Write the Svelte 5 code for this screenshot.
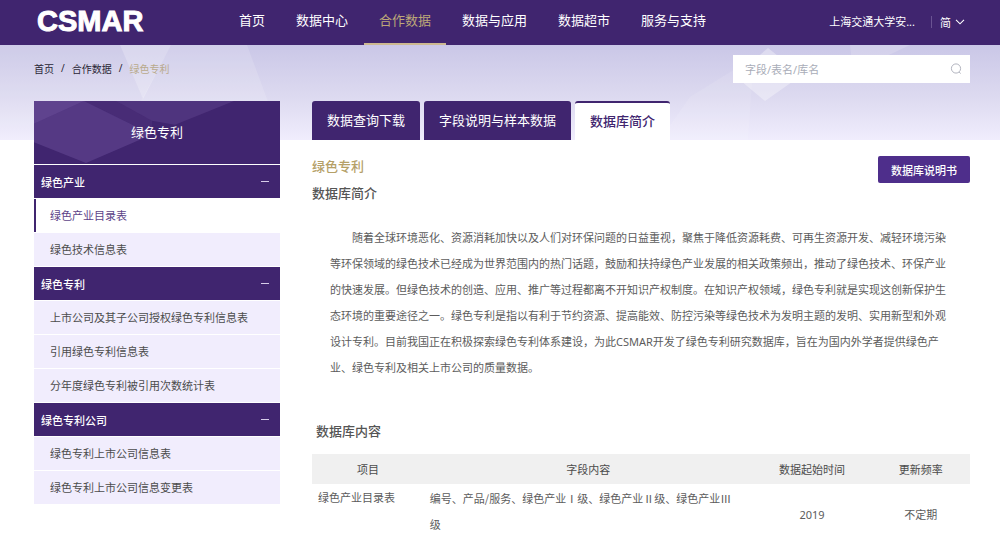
<script>
	const navItems = ['首页', '数据中心', '合作数据', '数据与应用', '数据超市', '服务与支持'];
	const tabs = ['数据查询下载', '字段说明与样本数据', '数据库简介'];

	let activeNav = $state('合作数据');
	let activeTab = $state('数据库简介');
	let activeItem = $state('绿色产业目录表');
	let keyword = $state('');

	let groups = $state([
		{ label: '绿色产业', open: true, items: ['绿色产业目录表', '绿色技术信息表'] },
		{
			label: '绿色专利',
			open: true,
			items: [
				'上市公司及其子公司授权绿色专利信息表',
				'引用绿色专利信息表',
				'分年度绿色专利被引用次数统计表'
			]
		},
		{
			label: '绿色专利公司',
			open: true,
			items: ['绿色专利上市公司信息表', '绿色专利上市公司信息变更表']
		}
	]);

	const rows = [
		{
			name: '绿色产业目录表',
			fields: '编号、产品/服务、绿色产业Ⅰ级、绿色产业Ⅱ级、绿色产业Ⅲ级',
			start: '2019',
			frequency: '不定期'
		}
	];
</script>

<header class="topbar">
	<a class="logo" href="#home">CSMAR</a>
	<nav class="nav">
		{#each navItems as item}
			<a
				class="nav-link"
				class:active={item === activeNav}
				href="#{item}"
				onclick={() => (activeNav = item)}>{item}</a
			>
		{/each}
	</nav>
	<div class="account">
		<a class="user" href="#user">上海交通大学安...</a>
		<button class="lang" type="button">
			简
			<svg width="10" height="6" viewBox="0 0 10 6" aria-hidden="true">
				<path d="M1 0.8 L5 4.8 L9 0.8" fill="none" stroke="currentColor" stroke-width="1.1" />
			</svg>
		</button>
	</div>
</header>

<div class="page">
	<svg class="banner" viewBox="0 0 1000 95" preserveAspectRatio="none" aria-hidden="true">
		<defs>
			<linearGradient id="sky" x1="0" y1="0" x2="0" y2="1">
				<stop offset="0" stop-color="#cac7e7" />
				<stop offset="0.55" stop-color="#dddaf0" />
				<stop offset="1" stop-color="#f0edfd" />
			</linearGradient>
		</defs>
		<rect width="1000" height="95" fill="url(#sky)" />
		<g fill="#fff">
			<polygon points="120,0 171,0 143,54" opacity="0.28" />
			<polygon points="171,0 247,0 270,62 280,95 120,95" opacity="0.14" />
			<polygon points="0,0 120,0 143,54 100,95 0,95" opacity="0.08" />
			<polygon points="690,52 735,24 752,38 748,95 660,95" opacity="0.1" />
			<polygon points="768,3 802,30 765,56 735,31" opacity="0.34" />
			<polygon points="850,0 910,0 872,18 852,18" opacity="0.16" />
		</g>
	</svg>

	<div class="crumb-row">
		<nav class="crumbs" aria-label="breadcrumb">
			<a href="#home">首页</a>
			<span class="slash">/</span>
			<a href="#data">合作数据</a>
			<span class="slash">/</span>
			<span class="current">绿色专利</span>
		</nav>
		<form class="search" onsubmit={(e) => e.preventDefault()}>
			<input
				type="text"
				aria-label="字段/表名/库名"
				placeholder="字段/表名/库名"
				bind:value={keyword}
			/>
			<button type="submit" aria-label="搜索">
				<svg width="12" height="12" viewBox="0 0 12 12" aria-hidden="true">
					<circle cx="6" cy="5.5" r="4.6" fill="none" stroke="#a9acb8" stroke-width="0.9" />
					<path d="M9.2 9 L10.6 10.6" stroke="#a9acb8" stroke-width="0.9" />
				</svg>
			</button>
		</form>
	</div>

	<div class="columns">
		<aside class="sidebar">
			<div class="side-title">
				<svg viewBox="0 0 246 64" preserveAspectRatio="none" aria-hidden="true">
					<g fill="#a184d0">
						<polygon points="0,0 50,0 0,23" opacity="0.32" />
						<polygon points="50,0 118,34 52,63 0,42 0,23" opacity="0.22" />
						<polygon points="82,0 200,0 141,24 118,20" opacity="0.16" />
						<polygon points="50,0 82,0 118,20 118,34" opacity="0.08" />
					</g>
				</svg>
				<h2>绿色专利</h2>
			</div>
			{#each groups as group}
				<button
					class="group"
					type="button"
					aria-expanded={group.open}
					onclick={() => (group.open = !group.open)}
				>
					{group.label}
					<svg width="8" height="8" viewBox="0 0 8 8" aria-hidden="true">
						<path d="M0 3.5 H8" stroke="#d6cce8" />
						{#if !group.open}
							<path d="M4 0 V8" stroke="#d6cce8" />
						{/if}
					</svg>
				</button>
				{#if group.open}
					<ul>
						{#each group.items as item}
							<li>
								<a
									class="item"
									class:active={item === activeItem}
									href="#{item}"
									onclick={() => (activeItem = item)}>{item}</a
								>
							</li>
						{/each}
					</ul>
				{/if}
			{/each}
		</aside>

		<main class="content">
			<div class="tabs" role="tablist">
				{#each tabs as tab}
					<button
						class="tab"
						class:active={tab === activeTab}
						type="button"
						role="tab"
						aria-selected={tab === activeTab}
						onclick={() => (activeTab = tab)}>{tab}</button
					>
				{/each}
			</div>

			<div class="intro-head">
				<div>
					<h1>绿色专利</h1>
					<h3>数据库简介</h3>
				</div>
				<button class="manual" type="button">数据库说明书</button>
			</div>

			<p class="intro">
				随着全球环境恶化、资源消耗加快以及人们对环保问题的日益重视，聚焦于降低资源耗费、可再生资源开发、减轻环境污染等环保领域的绿色技术已经成为世界范围内的热门话题，鼓励和扶持绿色产业发展的相关政策频出，推动了绿色技术、环保产业的快速发展。但绿色技术的创造、应用、推广等过程都离不开知识产权制度。在知识产权领域，绿色专利就是实现这创新保护生态环境的重要途径之一。绿色专利是指以有利于节约资源、提高能效、防控污染等绿色技术为发明主题的发明、实用新型和外观设计专利。目前我国正在积极探索绿色专利体系建设，为此CSMAR开发了绿色专利研究数据库，旨在为国内外学者提供绿色产业、绿色专利及相关上市公司的质量数据。
			</p>

			<h3 class="table-title">数据库内容</h3>
			<table>
				<thead>
					<tr>
						<th class="col-name">项目</th>
						<th class="col-fields">字段内容</th>
						<th class="col-start">数据起始时间</th>
						<th class="col-freq">更新频率</th>
					</tr>
				</thead>
				<tbody>
					{#each rows as row}
						<tr>
							<td class="name">{row.name}</td>
							<td class="fields">{row.fields}</td>
							<td class="center">{row.start}</td>
							<td class="center">{row.frequency}</td>
						</tr>
					{/each}
				</tbody>
			</table>
		</main>
	</div>
</div>

<style>
	:global(body) {
		background: #fff;
		color: #5c5c5c;
		font-family: 'Noto Sans', 'Noto Sans CJK SC', sans-serif;
		font-size: 11px;
	}

	a {
		color: inherit;
		text-decoration: none;
	}

	button {
		border: none;
		padding: 0;
		background: none;
		color: inherit;
		font: inherit;
		cursor: pointer;
	}

	h1,
	h2,
	h3,
	p,
	ul {
		margin: 0;
		padding: 0;
	}

	.topbar {
		display: flex;
		align-items: center;
		height: 45px;
		padding: 0 35px 0 37px;
		background: #40256f;
		color: #fff;
	}

	.logo {
		width: 106px;
		margin-right: 81px;
		padding-bottom: 4px;
		font-family: 'Liberation Sans', sans-serif;
		font-size: 29px;
		font-weight: 700;
		line-height: 32px;
		-webkit-text-stroke: 1px #fff;
	}

	.nav {
		display: flex;
		gap: 1px;
		height: 100%;
	}

	.nav-link {
		box-sizing: border-box;
		height: 45px;
		padding: 0 15px;
		border-bottom: 2px solid transparent;
		font-size: 13px;
		line-height: 41px;
		white-space: nowrap;
	}

	.nav-link.active {
		border-bottom-color: #cdb990;
		color: #bda878;
	}

	.account {
		display: flex;
		align-items: center;
		margin-left: auto;
		padding-bottom: 2px;
		white-space: nowrap;
	}

	.user {
		padding-right: 16px;
		line-height: 12px;
		border-right: 1px solid #6a5392;
	}

	.lang {
		display: flex;
		align-items: center;
		gap: 4px;
		padding-left: 8px;
	}

	.page {
		position: relative;
		padding: 0 30px 0 34px;
	}

	.banner {
		position: absolute;
		top: 0;
		left: 0;
		z-index: -1;
		width: 100%;
		height: 95px;
	}

	.crumb-row {
		display: flex;
		justify-content: space-between;
		align-items: center;
		height: 28px;
		padding: 10px 0 18px;
	}

	.crumbs {
		display: flex;
		gap: 7px;
		padding-bottom: 2px;
		color: #2a2636;
		font-size: 10px;
	}

	.current {
		color: #b9aa8c;
	}

	.search {
		display: flex;
		align-items: center;
		width: 36%;
		max-width: 237px;
		height: 28px;
		background: #fff;
	}

	.search input {
		flex: 1;
		min-width: 0;
		border: none;
		padding: 0 12px;
		background: none;
		color: #555;
		font: inherit;
		outline: none;
	}

	.search input::placeholder {
		color: #a9adb8;
	}

	.search button {
		display: flex;
		padding: 0 8px;
	}

	.columns {
		display: grid;
		grid-template-columns: 246px 1fr;
		gap: 32px;
		align-items: start;
	}

	.side-title {
		position: relative;
		display: flex;
		align-items: center;
		justify-content: center;
		height: 63px;
		margin-bottom: 1px;
		background: #40256f;
		color: #fff;
	}

	.side-title svg {
		position: absolute;
		inset: 0;
		width: 100%;
		height: 100%;
	}

	.side-title h2 {
		position: relative;
		padding-bottom: 2px;
		font-size: 13px;
		font-weight: 400;
	}

	.group {
		display: flex;
		align-items: center;
		justify-content: space-between;
		width: 100%;
		height: 33px;
		margin-bottom: 1px;
		padding: 0 11px 0 7px;
		background: #40256f;
		color: #fff;
		font-weight: 500;
	}

	ul {
		list-style: none;
	}

	.item {
		display: block;
		height: 33px;
		margin-bottom: 1px;
		padding-left: 16px;
		background: #f1edfd;
		color: #4c4c4c;
		line-height: 33px;
	}

	.item.active {
		padding-left: 14px;
		border-left: 2px solid #40256f;
		background: #fff;
		color: #5d4389;
	}

	.tabs {
		display: flex;
		gap: 4px;
	}

	.tab {
		box-sizing: border-box;
		height: 39px;
		padding: 0 15px 2px;
		border-radius: 3px 3px 0 0;
		background: #40256f;
		color: #fff;
		font-size: 13px;
		white-space: nowrap;
	}

	.tab.active {
		border-top: 2px solid #40256f;
		background: #fff;
		color: #40256f;
		font-weight: 500;
	}

	.intro-head {
		display: flex;
		justify-content: space-between;
		align-items: flex-start;
		padding-top: 13px;
	}

	h1,
	h3 {
		font-size: 13px;
		font-weight: 500;
		line-height: 27px;
	}

	h1 {
		color: #b5a067;
	}

	h3 {
		color: #555;
	}

	.manual {
		height: 27px;
		margin-top: 3px;
		padding: 0 13px;
		border-radius: 2px;
		background: #4e2e8b;
		color: #fff;
		font-weight: 500;
	}

	.intro {
		padding: 18px 18px 0;
		line-height: 26px;
		text-indent: 2em;
	}

	.table-title {
		margin-top: 37px;
		padding-left: 4px;
	}

	table {
		width: 100%;
		margin-top: 9px;
		border-collapse: collapse;
		table-layout: fixed;
	}

	th {
		height: 30px;
		padding: 0;
		background: #f0f0f0;
		color: #4c4c4c;
		font-weight: 400;
	}

	.col-name {
		width: 17%;
	}

	.col-fields {
		width: 50%;
	}

	.col-start {
		width: 18%;
	}

	.col-freq {
		width: 15%;
	}

	td {
		padding: 1px 6px 0;
		line-height: 26px;
		vertical-align: top;
	}

	/* full-width roman numerals come from the CJK family */
	.fields {
		padding-right: 16px;
		font-family: 'Noto Sans CJK SC', 'Noto Sans', sans-serif;
	}

	.center {
		padding-top: 9px;
		text-align: center;
		vertical-align: middle;
	}
</style>
